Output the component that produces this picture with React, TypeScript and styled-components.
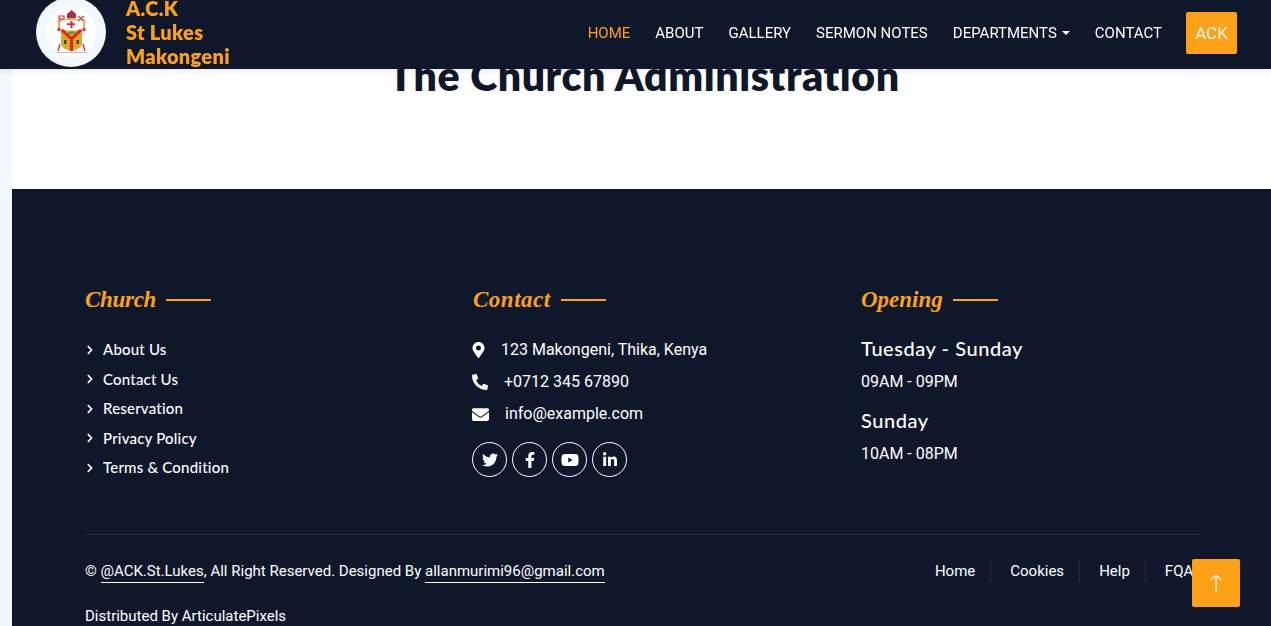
import styled, { createGlobalStyle } from "styled-components";
import {
  FaChevronRight,
  FaEnvelope,
  FaFacebookF,
  FaLinkedinIn,
  FaMapMarkerAlt,
  FaPhoneAlt,
  FaTwitter,
  FaYoutube,
} from "react-icons/fa";
import { BsArrowUp } from "react-icons/bs";

const PRIMARY = "#fea116";
const DARK = "#0f172b";
const LIGHT = "#f1f8ff";
const HEADING_FONT = '"Lato", "Open Sans", sans-serif';
const SCRIPT_FONT = '"Liberation Serif", serif';
const BODY_FONT = 'Roboto, "Liberation Sans", sans-serif';

const GlobalStyle = createGlobalStyle`
  html, body {
    margin: 0;
    padding: 0;
    overflow: hidden;
    background: ${LIGHT};
    font-family: ${BODY_FONT};
  }
  a {
    color: inherit;
    text-decoration: none;
  }
`;

const navItems = ["Home", "About", "Gallery", "Sermon Notes", "Departments", "Contact"];
const churchLinks = ["About Us", "Contact Us", "Reservation", "Privacy Policy", "Terms & Condition"];
const bottomLinks = ["Home", "Cookies", "Help", "FQAs"];

const Crest = () => (
  <CrestSvg width="38" height="46" viewBox="0 0 38 46">
    <path d="M5 13C8 9 13 11 15 11M24 11C27 11 31 9 34 13" stroke="#e2b04a" strokeWidth="1.200" fill="none" />
    <path d="M15 11V5l4.500-4L24 5v6z" fill="#a6304a" />
    <path d="M15 9h9v2h-9z" fill="#e2b04a" />
    <path d="M18.500 12h2v2.200H23v1.800h-2.500v3h-2v-3H15v-1.800h3.500z" fill="#e3232c" />
    <path d="M7 7h5v3H7zM8 10v3M26 7l6 5M32 7l-6 5" stroke="#d8343c" strokeWidth="1.200" fill="none" />
    <path d="M6 13h2v6H6zM31 13h2v6h-2z" fill="#e2b04a" />
    <path d="M5.500 19h3v3h-3zM30.500 19h3v3h-3z" fill="#d8343c" />
    <path d="M9 20C13 22 26 22 30 20V34C30 39 24 41 19.500 42 15 41 9 39 9 34z" fill="#dfa823" />
    <path d="M16 24c1-2 6-2 7 0v1h-7z" fill="#4f9e48" />
    <path d="M10 21L19.500 30 29 21M19.500 30V42" stroke="#e3232c" strokeWidth="3" fill="none" />
    <path d="M12 31h2.500v4H12zM24.500 31H27v4h-2.500z" fill="#4a4636" />
    <path d="M8 35L6 42M31 35l2 7" stroke="#d8343c" strokeWidth="1.400" />
    <path d="M5 43.500h30" stroke="#e7a9b4" strokeWidth="1" />
  </CrestSvg>
);

export default function App() {
  return (
    <Page>
      <GlobalStyle />
      <Navbar>
        <Brand href="#">
          <LogoDisc>
            <LogoInner>
              <Crest />
            </LogoInner>
          </LogoDisc>
          <BrandName>
            A.C.K
            <br />
            St Lukes
            <br />
            Makongeni
          </BrandName>
        </Brand>
        <NavList>
          {navItems.map((item, i) => (
            <NavLink key={item} href="#" $active={i === 0} $caret={item === "Departments"}>
              {item}
            </NavLink>
          ))}
          <NavButton href="#">ACK</NavButton>
        </NavList>
      </Navbar>

      <Hero>
        <HeroTitle>The Church Administration</HeroTitle>
      </Hero>

      <Footer>
        <Columns>
          <Column>
            <ColumnTitle $tracking={-0.3}>Church</ColumnTitle>
            <LinkList>
              {churchLinks.map((link) => (
                <LinkRow key={link} href="#">
                  <FaChevronRight size={10} />
                  {link}
                </LinkRow>
              ))}
            </LinkList>
          </Column>
          <Column>
            <ColumnTitle $tracking={0.5}>Contact</ColumnTitle>
            <ContactRow $iconWidth={13} $iconHeight={16}>
              <FaMapMarkerAlt />
              123 Makongeni, Thika, Kenya
            </ContactRow>
            <ContactRow $iconWidth={16} $iconHeight={16}>
              <FaPhoneAlt />
              +0712 345 67890
            </ContactRow>
            <ContactRow $iconWidth={17} $iconHeight={17}>
              <FaEnvelope />
              info@example.com
            </ContactRow>
            <SocialRow>
              <SocialButton href="#"><FaTwitter size={16} /></SocialButton>
              <SocialButton href="#"><FaFacebookF size={16} /></SocialButton>
              <SocialButton href="#"><FaYoutube size={18} /></SocialButton>
              <SocialButton href="#"><FaLinkedinIn size={16} /></SocialButton>
            </SocialRow>
          </Column>
          <Column>
            <ColumnTitle>Opening</ColumnTitle>
            <OpeningList>
              <OpeningDay>Tuesday - Sunday</OpeningDay>
              <OpeningHours>09AM - 09PM</OpeningHours>
              <OpeningDay>Sunday</OpeningDay>
              <OpeningHours>10AM - 08PM</OpeningHours>
            </OpeningList>
          </Column>
        </Columns>

        <Copyright>
          <CopyText>
            © <CopyLink href="#">@ACK.St.Lukes</CopyLink>, All Right Reserved. Designed By{" "}
            <CopyLink href="#">allanmurimi96@gmail.com</CopyLink>
            <Distributed>Distributed By ArticulatePixels</Distributed>
          </CopyText>
          <BottomMenu>
            {bottomLinks.map((link) => (
              <BottomLink key={link} href="#">
                {link}
              </BottomLink>
            ))}
          </BottomMenu>
        </Copyright>
      </Footer>

      <BackToTop href="#">
        <BsArrowUp size={20} />
      </BackToTop>
    </Page>
  );
}

const Page = styled.div`
  height: 626px;
  padding-left: 12px;
  overflow: hidden;
  background: ${LIGHT};
`;

const Navbar = styled.nav`
  position: fixed;
  top: 0;
  left: 0;
  right: 0;
  z-index: 10;
  height: 69px;
  box-sizing: border-box;
  padding: 0 34px 3px 36px;
  display: flex;
  align-items: center;
  justify-content: space-between;
  background: ${DARK};
  box-shadow: 0 2px 6px rgba(0, 0, 0, 0.08);
`;

const Brand = styled.a`
  display: flex;
  align-items: center;
  gap: 20px;
  margin-bottom: 2px;
`;

const LogoDisc = styled.div`
  width: 70px;
  height: 70px;
  border-radius: 50%;
  background: ${LIGHT};
  display: flex;
  align-items: center;
  justify-content: center;
  flex-shrink: 0;
`;

const LogoInner = styled.div`
  width: 50px;
  height: 50px;
  border-radius: 50%;
  background: #fff;
  display: flex;
  align-items: center;
  justify-content: center;
`;

const CrestSvg = styled.svg`
  filter: blur(0.3px);
`;

const BrandName = styled.div`
  font-family: ${HEADING_FONT};
  font-weight: 800;
  font-size: 20px;
  line-height: 24px;
  letter-spacing: 0.3px;
  color: ${PRIMARY};
`;

const NavList = styled.div`
  display: flex;
  align-items: center;
`;

const NavLink = styled.a<{ $active?: boolean; $caret?: boolean }>`
  margin-right: 25px;
  font-size: 15px;
  font-weight: 400;
  text-transform: uppercase;
  color: ${(p) => (p.$active ? PRIMARY : "#fff")};

  &:nth-last-child(2) {
    margin-right: 24px;
  }

  ${(p) =>
    p.$caret &&
    `
    &::after {
      content: "";
      display: inline-block;
      margin-left: 5px;
      vertical-align: 3px;
      border-top: 4px solid;
      border-left: 4px solid transparent;
      border-right: 4px solid transparent;
    }
  `}
`;

const NavButton = styled.a`
  width: 51px;
  height: 42px;
  display: flex;
  align-items: center;
  justify-content: center;
  border-radius: 2px;
  background: ${PRIMARY};
  color: #fff;
  font-size: 17px;
`;

const Hero = styled.section`
  height: 189px;
  box-sizing: border-box;
  padding: 52px 0 0 5px;
  background: #fff;
  text-align: center;
`;

const HeroTitle = styled.h1`
  margin: 0;
  font-family: ${HEADING_FONT};
  font-weight: 800;
  font-size: 41px;
  line-height: 48px;
  letter-spacing: 0.6px;
  font-variant-ligatures: none;
  color: ${DARK};
`;

const Footer = styled.footer`
  height: 437px;
  box-sizing: border-box;
  padding: 96px 0 0 73px;
  background: ${DARK};
  color: #fff;
`;

const Columns = styled.div`
  width: 1116px;
  height: 249px;
  display: grid;
  grid-template-columns: 388px 388px 1fr;
  border-bottom: 1px solid rgba(255, 255, 255, 0.1);
`;

const Column = styled.div`
  display: flex;
  flex-direction: column;
  align-items: flex-start;
`;

const ColumnTitle = styled.h4<{ $tracking?: number }>`
  margin: 0 0 24px;
  display: flex;
  align-items: center;
  gap: 10px;
  font-family: ${SCRIPT_FONT};
  font-style: italic;
  font-weight: 700;
  font-size: 23px;
  line-height: 30px;
  letter-spacing: ${(p) => p.$tracking ?? 0}px;
  color: ${PRIMARY};

  &::after {
    content: "";
    width: 45px;
    height: 2px;
    background: ${PRIMARY};
  }
`;

const LinkList = styled.div`
  display: flex;
  flex-direction: column;
  gap: 8px;
`;

const LinkRow = styled.a`
  display: flex;
  align-items: center;
  gap: 8px;
  font-family: ${HEADING_FONT};
  font-size: 15px;
  font-weight: 500;
  line-height: 21.5px;
  letter-spacing: 0.2px;
`;

const ContactRow = styled.div<{ $iconWidth: number; $iconHeight: number }>`
  margin-bottom: 10px;
  margin-left: -1px;
  display: flex;
  align-items: center;
  gap: 16px;
  font-size: 16px;
  line-height: 22px;

  svg {
    width: ${(p) => p.$iconWidth}px;
    height: ${(p) => p.$iconHeight}px;
  }
`;

const SocialRow = styled.div`
  margin: 7px 0 0 -1px;
  display: flex;
  gap: 5px;
`;

const SocialButton = styled.a`
  width: 35px;
  height: 35px;
  box-sizing: border-box;
  display: flex;
  align-items: center;
  justify-content: center;
  border: 1px solid #fff;
  border-radius: 50%;
`;

const OpeningList = styled.div`
  margin-top: -3px;
`;

const OpeningDay = styled.h5`
  margin: 0 0 10px;
  font-family: ${HEADING_FONT};
  font-weight: 500;
  font-size: 20px;
  line-height: 24px;
  letter-spacing: 0.55px;
`;

const OpeningHours = styled.p`
  margin: 0 0 14px;
  font-size: 16px;
  line-height: 24px;
`;

const Copyright = styled.div`
  width: 1116px;
  padding-top: 25px;
  display: flex;
  justify-content: space-between;
  font-size: 15px;
`;

const CopyText = styled.div`
  line-height: 22px;
`;

const CopyLink = styled.a`
  padding-bottom: 2px;
  border-bottom: 1px solid #fff;
`;

const Distributed = styled.div`
  margin-top: 23px;
`;

const BottomMenu = styled.div`
  display: flex;
  height: 22px;
`;

const BottomLink = styled.a`
  padding: 0 15px 0 19px;
  line-height: 22px;
  border-right: 1px solid rgba(255, 255, 255, 0.1);

  &:first-child {
    padding-left: 0;
  }

  &:last-child {
    padding-right: 0;
    border-right: none;
  }
`;

const BackToTop = styled.a`
  position: fixed;
  left: 1192px;
  top: 559px;
  z-index: 5;
  width: 48px;
  height: 48px;
  display: flex;
  align-items: center;
  justify-content: center;
  border-radius: 2px;
  background: ${PRIMARY};
  color: #fff;
`;
